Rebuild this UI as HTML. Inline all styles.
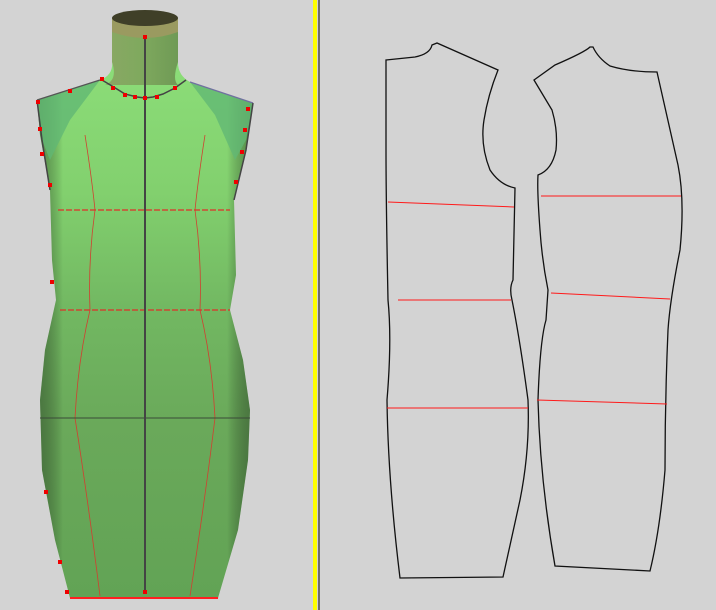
<!DOCTYPE html>
<html><head><style>
html,body{margin:0;padding:0;width:716px;height:610px;overflow:hidden;background:#d3d3d3;}
svg{display:block}
</style></head><body>
<svg width="716" height="610" viewBox="0 0 716 610" xmlns="http://www.w3.org/2000/svg">
<defs>
<linearGradient id="body" x1="0" y1="0" x2="0" y2="1">
<stop offset="0" stop-color="#8fe27c"/>
<stop offset="0.3" stop-color="#82d06e"/>
<stop offset="0.5" stop-color="#72b862"/>
<stop offset="0.7" stop-color="#6aa95a"/>
<stop offset="1" stop-color="#62a355"/>
</linearGradient>
<linearGradient id="side" x1="0" y1="0" x2="1" y2="0">
<stop offset="0" stop-color="#2f4a2a" stop-opacity="0.55"/>
<stop offset="0.12" stop-color="#000" stop-opacity="0"/>
<stop offset="0.88" stop-color="#000" stop-opacity="0"/>
<stop offset="1" stop-color="#2f4a2a" stop-opacity="0.55"/>
</linearGradient>
<linearGradient id="neck" x1="0" y1="0" x2="1" y2="0">
<stop offset="0" stop-color="#8aa864"/>
<stop offset="0.5" stop-color="#7fa95e"/>
<stop offset="1" stop-color="#6f9a55"/>
</linearGradient>
</defs>
<rect x="0" y="0" width="716" height="610" fill="#d3d3d3"/>
<rect x="313" y="0" width="4" height="610" fill="#ffff00"/>
<rect x="318" y="0" width="2" height="610" fill="#6e6e6e"/>

<path d="M112,18 L112,60 Q114,75 100,80 L37,100 L40,135 L50,190 L52,260 L56,300 L45,350 L40,400 L42,470 L55,540 L70,598 L218,598 L238,530 L248,460 L250,410 L243,360 L230,310 L236,275 L234,200 L246,150 L253,103 L190,82 Q177,75 178,60 L178,18 Z" fill="url(#body)"/>
<path d="M112,18 L112,60 Q114,75 100,80 L37,100 L40,135 L50,190 L52,260 L56,300 L45,350 L40,400 L42,470 L55,540 L70,598 L218,598 L238,530 L248,460 L250,410 L243,360 L230,310 L236,275 L234,200 L246,150 L253,103 L190,82 Q177,75 178,60 L178,18 Z" fill="url(#side)"/>
<path d="M112,18 L112,62 Q118,80 105,85 L178,85 Q172,80 178,62 L178,18 Z" fill="url(#neck)"/>
<path d="M112,18 L112,32 Q145,44 178,32 L178,18 Z" fill="#9a9a60"/>
<ellipse cx="145" cy="18" rx="33" ry="8" fill="#3f3f28"/>
<path d="M37,100 L100,80 L70,120 L50,160 L42,140 Z" fill="#62b874" opacity="0.8"/>
<path d="M253,103 L190,82 L215,115 L235,160 L246,140 Z" fill="#62b874" opacity="0.8"/>
<polyline points="102,80 112,86 125,94 137,97 145,98 153,97 163,94 175,88 186,80" fill="none" stroke="#444" stroke-width="1.5"/>
<polyline points="37,100 100,80" fill="none" stroke="#555" stroke-width="1.2"/>
<polyline points="190,82 253,103" fill="none" stroke="#7070a0" stroke-width="1.2"/>
<polyline points="37,100 42,140 50,190" fill="none" stroke="#444" stroke-width="1.5"/>
<polyline points="253,103 246,150 234,200" fill="none" stroke="#444" stroke-width="1.5"/>
<path d="M85,135 Q92,180 95,210 Q88,260 90,310 Q78,360 75,418 Q88,500 100,596" fill="none" stroke="#d04030" stroke-width="0.8"/>
<path d="M205,135 Q198,180 195,210 Q202,260 200,310 Q212,360 215,418 Q205,500 190,596" fill="none" stroke="#d04030" stroke-width="0.8"/>
<line x1="58" y1="210" x2="230" y2="210" stroke="#e0302a" stroke-width="1.2" stroke-dasharray="6,2"/>
<line x1="60" y1="310" x2="230" y2="310" stroke="#e0302a" stroke-width="1.2" stroke-dasharray="6,2"/>
<line x1="40" y1="418" x2="250" y2="418" stroke="#3a4a38" stroke-width="1"/>
<line x1="145" y1="37" x2="145" y2="592" stroke="#444" stroke-width="2"/>
<line x1="70" y1="598" x2="218" y2="598" stroke="#ff2020" stroke-width="2"/>
<g fill="#ee0000">
<rect x="143" y="35" width="4" height="4"/><rect x="143" y="96" width="4" height="4"/>
<rect x="111" y="86" width="4" height="4"/><rect x="123" y="93" width="4" height="4"/><rect x="133" y="95" width="4" height="4"/>
<rect x="155" y="95" width="4" height="4"/><rect x="173" y="86" width="4" height="4"/><rect x="100" y="77" width="4" height="4"/>
<rect x="68" y="89" width="4" height="4"/><rect x="36" y="100" width="4" height="4"/><rect x="38" y="127" width="4" height="4"/>
<rect x="40" y="152" width="4" height="4"/><rect x="48" y="183" width="4" height="4"/><rect x="246" y="107" width="4" height="4"/>
<rect x="243" y="128" width="4" height="4"/><rect x="240" y="150" width="4" height="4"/><rect x="234" y="180" width="4" height="4"/>
<rect x="143" y="590" width="4" height="4"/><rect x="50" y="280" width="4" height="4"/><rect x="44" y="490" width="4" height="4"/>
<rect x="58" y="560" width="4" height="4"/><rect x="65" y="590" width="4" height="4"/>
</g>

<path d="M386,60 L415,57 Q430,54 432,45 L437,43 L498,70 Q488,95 484,120 Q480,145 490,170 Q500,185 515,188 L513,280 Q509,288 512,300 Q520,340 528,400 Q530,450 520,500 L503,577 L400,578 Q388,480 387,400 Q392,340 388,300 Q386,200 386,150 Z" fill="none" stroke="#111" stroke-width="1.3"/>
<path d="M534,80 L555,65 Q585,52 590,47 L593,47 Q598,58 610,66 Q630,72 657,72 Q668,120 678,165 Q685,200 680,250 Q670,300 668,330 Q665,400 665,470 Q660,530 650,571 L555,566 Q540,480 538,400 Q540,340 546,320 L548,290 Q542,260 540,230 Q537,190 538,175 Q552,170 556,150 Q558,130 552,110 Z" fill="none" stroke="#111" stroke-width="1.3"/>
<g stroke="#ff1a1a" stroke-width="1">
<line x1="388" y1="202" x2="514" y2="207"/>
<line x1="398" y1="300" x2="511" y2="300"/>
<line x1="387" y1="408" x2="528" y2="408"/>
<line x1="541" y1="196" x2="681" y2="196"/>
<line x1="551" y1="293" x2="670" y2="299"/>
<line x1="537" y1="400" x2="667" y2="404"/>
</g>
</svg>
</body></html>
